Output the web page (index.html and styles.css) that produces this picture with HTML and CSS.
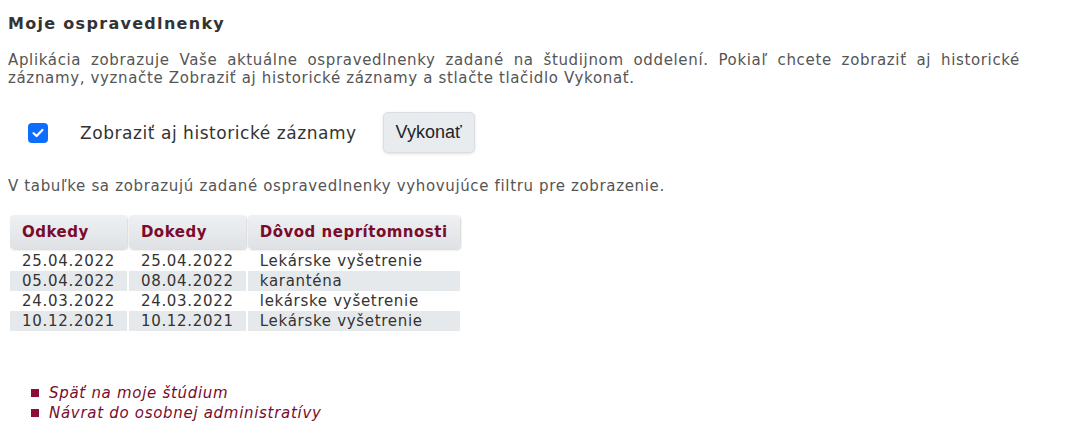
FILE: index.html
```html
<!DOCTYPE html>
<html lang="sk">
<head>
<meta charset="utf-8">
<title>Moje ospravedlnenky</title>
<link rel="stylesheet" href="styles.css">
</head>
<body>
<div class="page">
  <h2 class="title">Moje ospravedlnenky</h2>
  <p class="intro">Aplikácia zobrazuje Vaše aktuálne ospravedlnenky zadané na študijnom oddelení. Pokiaľ chcete zobraziť aj historické záznamy, vyznačte Zobraziť aj historické záznamy a stlačte tlačidlo Vykonať.</p>
  <form class="filter">
    <label class="check">
      <span class="box"><svg width="12" height="10" viewBox="0 0 12 10"><path d="M1.6 5.2 L4.6 8 L10.4 2" fill="none" stroke="#fff" stroke-width="2.2" stroke-linecap="round" stroke-linejoin="round"/></svg></span>
      <span class="check-label">Zobraziť aj historické záznamy</span>
    </label>
    <button type="button" class="btn">Vykonať</button>
  </form>
  <p class="note">V tabuľke sa zobrazujú zadané ospravedlnenky vyhovujúce filtru pre zobrazenie.</p>
  <table class="grid">
    <thead>
      <tr><th>Odkedy</th><th>Dokedy</th><th>Dôvod neprítomnosti</th></tr>
    </thead>
    <tbody>
      <tr><td>25.04.2022</td><td>25.04.2022</td><td>Lekárske vyšetrenie</td></tr>
      <tr class="alt"><td>05.04.2022</td><td>08.04.2022</td><td>karanténa</td></tr>
      <tr><td>24.03.2022</td><td>24.03.2022</td><td>lekárske vyšetrenie</td></tr>
      <tr class="alt"><td>10.12.2021</td><td>10.12.2021</td><td>Lekárske vyšetrenie</td></tr>
    </tbody>
  </table>
  <ul class="links">
    <li><a href="#">Späť na moje štúdium</a></li>
    <li><a href="#">Návrat do osobnej administratívy</a></li>
  </ul>
</div>
</body>
</html>
```
FILE: styles.css
```css
html, body {
  margin: 0;
  background: #fff;
}
body {
  font-family: "DejaVu Sans", Verdana, sans-serif;
  font-size: 15px;
  line-height: 18px;
  letter-spacing: 0.65px;
  color: #555;
}
.page {
  padding: 15px 8px 0 8px;
}
.title {
  margin: 0;
  font-size: 16px;
  line-height: 18px;
  font-weight: bold;
  letter-spacing: 1.3px;
  color: #333;
}
.intro {
  margin: 18px 0 0 0;
  width: 1012px;
  text-align: justify;
}
.filter {
  margin: 25px 0 0 0;
  display: flex;
  align-items: center;
  height: 41px;
}
.check {
  display: flex;
  align-items: center;
  margin-left: 20px;
}
.box {
  width: 20px;
  height: 20px;
  border-radius: 4px;
  background: #0d6efd;
  display: flex;
  align-items: center;
  justify-content: center;
}
.check-label {
  margin-left: 32px;
  font-size: 17px;
  letter-spacing: 0.55px;
  color: #333;
}
.btn {
  margin-left: 26px;
  height: 41px;
  width: 92px;
  padding: 0;
  font-family: "Liberation Sans", Arial, sans-serif;
  font-size: 18px;
  letter-spacing: 0;
  color: #212529;
  background: #e9ecef;
  border: 1px solid #dadee2;
  border-radius: 5px;
  box-shadow: 0 1px 3px rgba(0,0,0,0.12);
}
.note {
  margin: 24px 0 0 0;
}
.grid {
  margin: 20px 0 0 0;
  border-collapse: separate;
  border-spacing: 2px 0;
  color: #333;
  letter-spacing: 0.5px;
}
.grid th {
  height: 34px;
  padding: 0 12px;
  text-align: left;
  font-weight: bold;
  color: #7a0b2c;
  background: linear-gradient(#eef0f2, #dfe2e5);
  border-radius: 4px;
  box-shadow: 1px 1px 2px rgba(0,0,0,0.18);
}
.grid td {
  height: 20px;
  padding: 0 12px;
  line-height: 20px;
  letter-spacing: 0.7px;
}
.grid tbody tr:first-child td {
  padding-top: 2px;
}
.grid tr.alt td {
  background: #e6e9ec;
}
.links {
  list-style: none;
  margin: 52px 0 0 23px;
  padding: 0;
}
.links li {
  display: flex;
  align-items: center;
  line-height: 20px;
  letter-spacing: 0.7px;
}
.links li::before {
  content: "";
  width: 8px;
  height: 8px;
  background: #8e0d38;
  margin-right: 10px;
}
.links a {
  font-style: italic;
  color: #7a0b2c;
  text-decoration: none;
}
```
